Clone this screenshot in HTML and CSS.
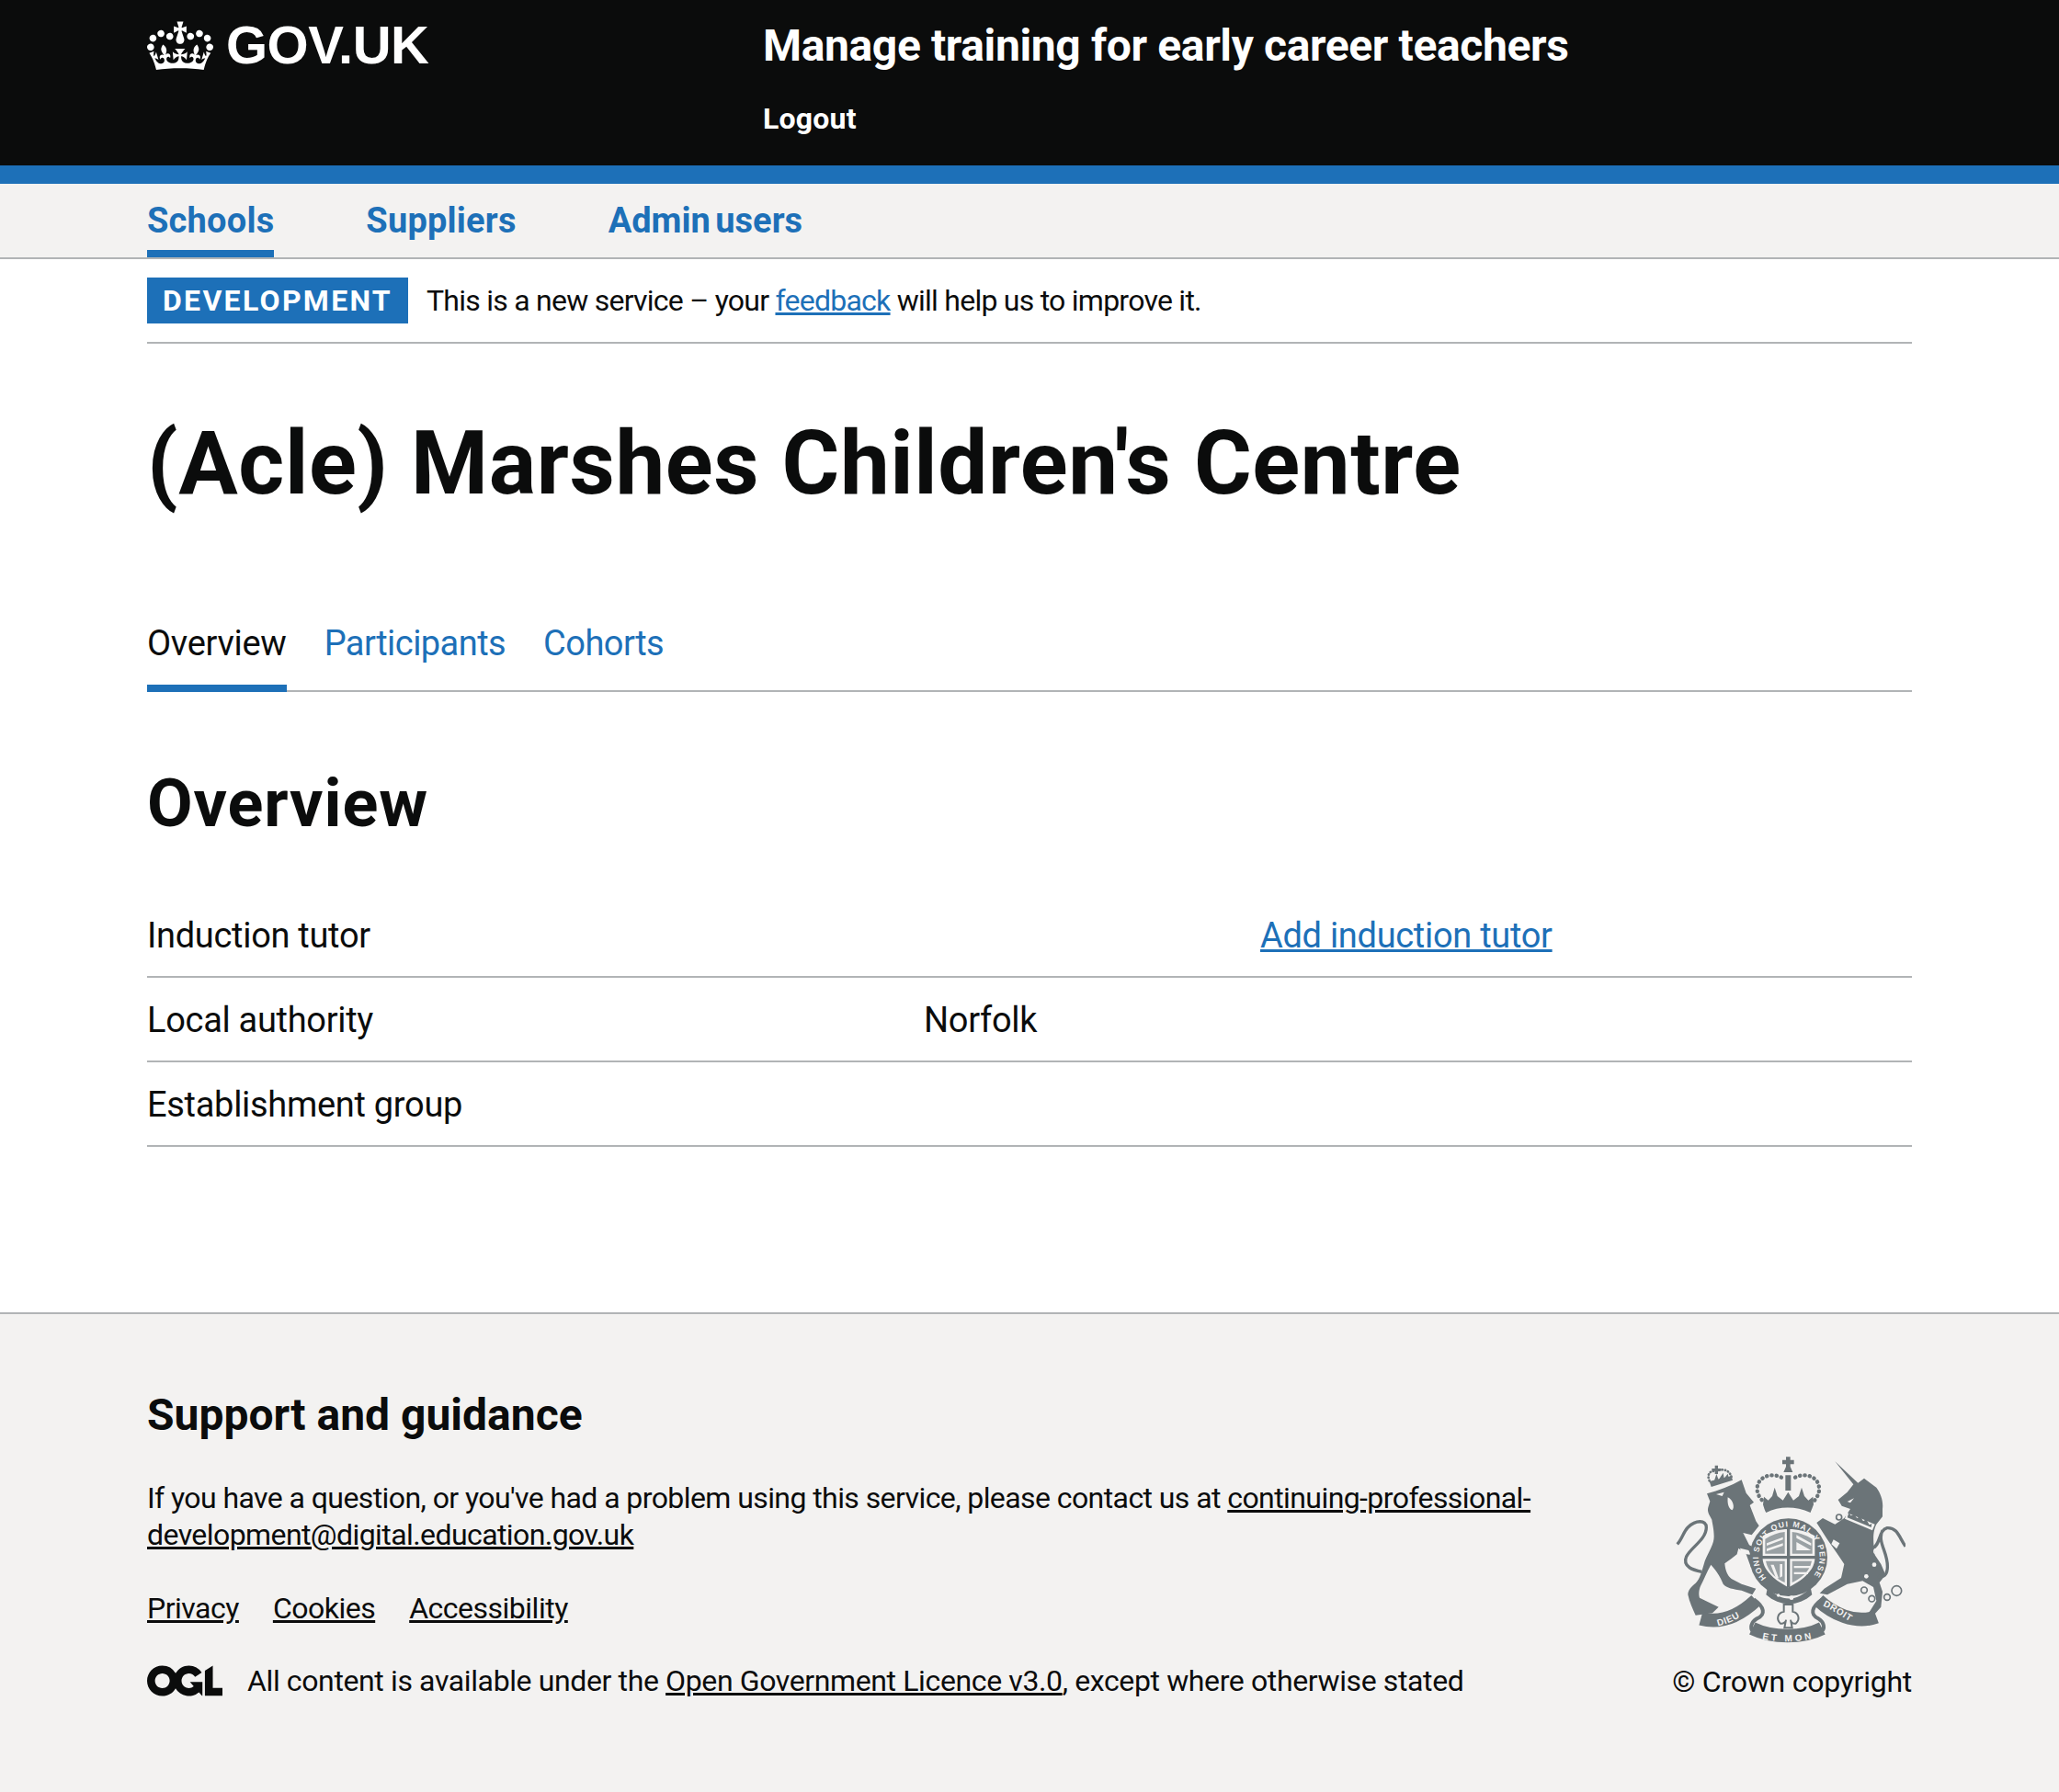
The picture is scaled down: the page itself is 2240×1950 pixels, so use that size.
FILE: index.html
```html
<!DOCTYPE html>
<html lang="en">

<head>
  <meta charset="UTF-8">
  <meta name="viewport" content="width=device-width, initial-scale=1.0">
  <title>Manage training for early career teachers</title>
  <link rel="stylesheet" href="styles.css">
</head>

<body>
  <header class="header">
    <div class="container header-row">
      <a class="logo" href="#">
        <svg class="crown" viewBox="0 0 132 97" aria-hidden="true">
          <path fill="currentColor" fill-rule="evenodd" d="M25 30.2c3.5 1.5 7.7-.2 9.1-3.7 1.5-3.6-.2-7.8-3.9-9.2-3.6-1.4-7.6.3-9.1 3.9-1.4 3.5.3 7.5 3.9 9zM9 39.5c3.6 1.5 7.8-.2 9.2-3.7 1.5-3.6-.2-7.8-3.9-9.1-3.6-1.5-7.6.2-9.1 3.8-1.4 3.5.3 7.5 3.8 9zM4.4 57.2c3.5 1.5 7.7-.2 9.1-3.8 1.5-3.6-.2-7.7-3.9-9.1-3.5-1.5-7.6.3-9.1 3.8-1.4 3.5.3 7.6 3.9 9.1zm38.3-21.4c3.5 1.5 7.7-.2 9.1-3.8 1.5-3.6-.2-7.7-3.9-9.1-3.6-1.5-7.6.3-9.1 3.8-1.3 3.6.4 7.7 3.9 9.1zm64.4-5.6c-3.6 1.5-7.8-.2-9.1-3.7-1.5-3.6.2-7.8 3.8-9.2 3.6-1.4 7.7.3 9.2 3.9 1.3 3.5-.4 7.5-3.9 9zm15.9 9.3c-3.6 1.5-7.7-.2-9.1-3.7-1.5-3.6.2-7.8 3.7-9.1 3.6-1.5 7.7.2 9.2 3.8 1.5 3.5-.3 7.5-3.8 9zm4.7 17.7c-3.6 1.5-7.8-.2-9.2-3.8-1.5-3.6.2-7.7 3.9-9.1 3.6-1.5 7.7.3 9.2 3.8 1.3 3.5-.4 7.6-3.9 9.1zM89.3 35.8c-3.6 1.5-7.8-.2-9.2-3.8-1.4-3.6.2-7.7 3.9-9.1 3.6-1.5 7.7.3 9.2 3.8 1.4 3.6-.3 7.7-3.9 9.1zM69.7 17.7l8.9 4.7V9.3l-8.9 2.8c-.2-.3-.5-.6-.9-.9L72.4 0H59.6l3.5 11.2c-.3.3-.6.5-.9.9l-8.8-2.8v13.1l8.8-4.7c.3.3.6.7.9.9l-5 15.4v.1c-.2.8-.4 1.6-.4 2.4 0 4.1 3.1 7.5 7 8.1h.2c.3 0 .7.1 1 .1.4 0 .7 0 1-.1h.2c4-.6 7.1-4.1 7.1-8.1 0-.8-.1-1.7-.4-2.4V34l-5.1-15.4c.4-.2.7-.6 1-.9zM66 92.8c16.9 0 32.8 1.1 47.1 3.2 4-16.9 8.9-26.7 14-33.5l-9.6-3.4c1 4.9 1.1 7.2 0 10.2-1.5-1.4-3-4.3-4.2-8.7L108.6 76c2.8-2 5-3.2 7.5-3.3-4.4 9.4-10 11.9-13.6 11.2-4.3-.8-6.3-4.6-5.6-7.9 1-4.7 5.7-5.9 8-.5 4.3-8.7-3-11.4-7.6-8.8 7.1-7.2 7.9-13.5 2.1-21.1-8 6.1-8.1 12.3-4.5 20.8-4.7-5.4-12.1-2.5-9.5 6.2 3.4-5.2 7.9-2 7.2 3.1-.6 4.3-6.4 7.8-13.5 7.2-10.3-.9-10.9-8-11.2-13.8 2.5-.5 7.1 1.8 11 7.3L80.2 60c-4.1 4.4-8 5.3-12.3 5.4 1.4-4.4 8-11.6 8-11.6H55.5s6.4 7.2 7.9 11.6c-4.2-.1-8-1-12.3-5.4l1.4 16.4c3.9-5.5 8.5-7.7 10.9-7.3-.3 5.8-.9 12.8-11.1 13.8-7.2.6-12.9-2.9-13.5-7.2-.7-5 3.8-8.3 7.1-3.1 2.7-8.7-4.6-11.6-9.4-6.2 3.7-8.5 3.6-14.7-4.6-20.8-5.8 7.6-5 13.9 2.2 21.1-4.7-2.6-11.9.1-7.7 8.8 2.3-5.5 7.1-4.2 8.1.5.7 3.3-1.3 7.1-5.7 7.9-3.5.7-9-1.8-13.5-11.2 2.5.1 4.7 1.3 7.5 3.3l-4.7-15.4c-1.2 4.4-2.7 7.2-4.3 8.7-1.1-3-.9-5.3 0-10.2l-9.5 3.4c5 6.9 9.9 16.7 14 33.5 14.8-2.1 30.8-3.2 47.7-3.2z"></path>
        </svg>
        <span class="logo-text">GOV.UK</span>
      </a>
      <div class="header-content">
        <a class="service-name" href="#">Manage training for early career teachers</a>
        <a class="header-link" href="#">Logout</a>
      </div>
    </div>
  </header>

  <nav class="primary-nav">
    <div class="container primary-nav-row">
      <a class="primary-link active" href="#">Schools</a>
      <a class="primary-link" href="#">Suppliers</a>
      <a class="primary-link" href="#">Admin users</a>
    </div>
  </nav>

  <div class="container">
    <div class="phase-banner">
      <strong class="phase-tag">Development</strong>
      <span>This is a new service – your <a href="#">feedback</a> will help us to improve it.</span>
    </div>

    <main>
      <h1 class="page-title">(Acle) Marshes Children's Centre</h1>

      <div class="tabs">
        <a class="tab active" href="#">Overview</a>
        <a class="tab" href="#">Participants</a>
        <a class="tab" href="#">Cohorts</a>
      </div>

      <h2 class="section-title">Overview</h2>

      <dl class="summary">
        <div class="summary-row">
          <dt>Induction tutor</dt>
          <dd></dd>
          <dd><a href="#">Add induction tutor</a></dd>
        </div>
        <div class="summary-row">
          <dt>Local authority</dt>
          <dd>Norfolk</dd>
          <dd></dd>
        </div>
        <div class="summary-row">
          <dt>Establishment group</dt>
          <dd></dd>
          <dd></dd>
        </div>
      </dl>
    </main>
  </div>

  <footer class="footer">
    <div class="container footer-row">
      <div class="footer-main">
        <h2 class="footer-title">Support and guidance</h2>
        <p class="footer-text">If you have a question, or you've had a problem using this service, please contact us at <a href="#">continuing-professional-development@digital.education.gov.uk</a></p>
        <div class="footer-links">
          <a href="#">Privacy</a>
          <a href="#">Cookies</a>
          <a href="#">Accessibility</a>
        </div>
        <div class="licence">
          <svg class="ogl" viewBox="0 0 483.2 195.7" aria-hidden="true">
            <path fill="currentColor" d="M421.5 142.8V.1l-50.7 32.3v161.1h112.4v-50.7zm-122.3-9.6A47.12 47.12 0 0 1 221 97.8c0-26 21.1-47.1 47.1-47.1 16.7 0 31.4 8.7 39.7 21.8l42.7-27.2A97.63 97.63 0 0 0 268.1 0c-36.5 0-68.3 20.1-85.1 49.7A98 98 0 0 0 97.8 0C43.9 0 0 43.9 0 97.8s43.9 97.8 97.8 97.8c36.5 0 68.3-20.1 85.1-49.7a97.76 97.76 0 0 0 149.6 25.4l19.4 22.2h3v-87.8h-80l24.3 27.5zM97.8 145c-26 0-47.1-21.1-47.1-47.1s21.1-47.1 47.1-47.1 47.2 21 47.2 47S123.8 145 97.8 145"></path>
          </svg>
          <span>All content is available under the <a href="#">Open Government Licence v3.0</a>, except where otherwise stated</span>
        </div>
      </div>
      <div class="footer-side">
        <svg class="crest" viewBox="130 80 750 610" aria-hidden="true">
          <defs>
            <path id="garter" d="M426 475A100 100 0 1 1 574 475"/>
            <path id="ribbon-left" d="M268 632C305 624 345 604 375 577"/>
            <path id="ribbon-mid" d="M412 674C465 686 530 686 584 672"/>
            <path id="ribbon-right" d="M610 566C645 582 688 612 726 634"/>
          </defs>
          <!-- lion -->
          <path d="M232 200C270 190 310 175 345 155L360 198L385 228L372 238L392 290L402 305L378 335L350 328L385 382L396 425L376 442L360 398L335 378L330 398L312 412L290 428C292 450 298 468 312 478L345 495L392 510L380 530L345 516C320 512 295 508 285 495C275 470 265 455 245 432C232 455 222 480 212 500C205 515 205 530 208 540L245 558L270 570L250 590L195 597C185 575 175 555 170 530C170 515 180 505 195 492C210 478 216 450 225 420C240 385 255 365 255 340C255 315 250 300 248 285C240 270 232 260 236 245L242 225Z"/>
          <path class="crest-line" d="M215 455C190 450 150 440 165 405C180 375 230 350 230 310C230 285 195 285 170 310C155 325 150 350 135 365"/>
          <path class="crest-mark" d="M262 202L288 195L282 208ZM300 212C318 220 324 248 314 254C302 250 298 230 300 212ZM350 328L392 378L370 368ZM340 378L368 385L375 400L345 395Z"/>
          <!-- lion's crown -->
          <path d="M258 108H268V118H278V126H268V136H258V126H248V118H258ZM240 160L312 142L316 156L246 178Z"/>
          <path class="crest-small-beads" d="M240 158C230 135 245 122 262 128C275 118 305 118 312 146"/>
          <path d="M256 158L263 136L270 155L285 132L288 150L300 135L303 148Z"/>
          <!-- unicorn -->
          <path d="M650 95L725 165L745 150L785 180C800 200 808 225 805 250L805 275L785 300C775 320 772 345 780 400L800 430L815 465L795 490L805 520L800 570L775 598L760 590L785 550L775 505L740 485L690 495L625 530L600 525L615 510L670 475L680 430L660 400L625 350L590 295L610 280L650 300L680 280L700 250L672 240L660 220L690 195L710 170Z"/>
          <path class="crest-line" d="M770 380C800 370 790 320 820 312C855 310 860 345 880 372M805 320C785 360 830 400 820 450C818 470 800 475 790 470"/>
          <path class="crest-mark" d="M688 262L780 300L772 320L682 282ZM645 350L665 362L655 380L638 365ZM690 226L712 215L700 230Z"/>
          <path d="M695 262L702 272L712 268L722 280L732 274L742 290L752 284L762 302L770 298L768 310L690 278Z"/>
          <circle class="crest-ring" cx="663" cy="277" r="9"/>
          <circle class="crest-ring" cx="745" cy="515" r="10"/>
          <circle class="crest-ring" cx="770" cy="543" r="10"/>
          <circle class="crest-ring" cx="820" cy="538" r="10"/>
          <circle class="crest-ring" cx="851" cy="517" r="16"/>
          <circle class="crest-dot" cx="752" cy="470" r="7"/>
          <circle class="crest-dot" cx="778" cy="432" r="7"/>
          <circle class="crest-ring-light" cx="785" cy="388" r="8"/>
          <!-- royal crown -->
          <path d="M490 80H504V90H516V104H504V112L512 130H482L490 112V104H478V90H490ZM488 140H506V190H488Z"/>
          <g class="crest-beads">
            <path d="M475 147C440 130 400 145 396 180C394 200 405 215 418 228"/>
            <path d="M520 147C555 130 595 145 598 180C600 200 590 215 578 228"/>
          </g>
          <path d="M415 236L418 210L432 222L445 208L453 180L462 208L480 222L497 195L514 222L532 208L541 180L550 208L563 222L578 210L580 236C575 250 572 255 570 262C520 240 470 240 425 262C420 255 418 245 415 236Z"/>
          <!-- garter and shield -->
          <circle cx="498" cy="408" r="127"/>
          <path d="M430 505C470 555 530 555 570 505L575 530C530 570 470 570 425 530Z"/>
          <path class="crest-shield" d="M414 338C440 322 470 316 498 316C530 316 556 322 584 338V415C580 455 540 485 498 506C458 485 418 455 414 415Z"/>
          <path d="M493 316H503V506H493ZM412 403H586V413H412Z"/>
          <g class="crest-quarter">
            <path d="M422 348C442 335 465 327 486 325V396H422ZM510 325C530 327 556 335 576 348V396H510Z"/>
            <path d="M424 420H486V490C460 478 432 458 424 420ZM510 420H574C566 458 535 478 510 490Z"/>
          </g>
          <path class="crest-mark" d="M427 362L480 342V350L427 370ZM427 380L480 362V370L427 388ZM524 335L572 362V370L524 345ZM524 358L572 385H524ZM516 436H568V443H516ZM516 456H562V463H516ZM440 432L450 432L466 476L458 478ZM470 430H478V470L470 474Z"/>
          <text class="crest-text"><textPath href="#garter" textLength="450" lengthAdjust="spacing">HONI SOIT QUI MAL Y PENSE</textPath></text>
          <circle class="crest-dot" cx="508" cy="540" r="7"/>
          <circle class="crest-dot" cx="465" cy="532" r="5"/>
          <!-- motto ribbon -->
          <g class="crest-ribbon">
            <path d="M212 608C285 628 345 592 392 548"/>
            <path d="M380 640C445 672 545 672 608 640"/>
            <path d="M596 548C640 590 715 628 785 602"/>
          </g>
          <g class="crest-fold">
            <path d="M385 545C420 570 425 595 395 608C375 620 372 640 382 650"/>
            <path d="M608 545C572 570 568 595 596 608C615 620 618 640 606 650"/>
          </g>
          <text class="crest-motto"><textPath href="#ribbon-left">DIEU</textPath></text>
          <text class="crest-motto"><textPath href="#ribbon-mid" textLength="165">ET MON</textPath></text>
          <text class="crest-motto"><textPath href="#ribbon-right">DROIT</textPath></text>
          <!-- fleur-de-lis -->
          <path class="crest-fleur" d="M483 562H512V585C530 588 538 610 522 624C512 626 505 618 505 612L510 638H485L490 612C490 618 482 626 472 624C456 610 464 588 483 585Z"/>
        </svg>
        <span class="copyright">© Crown copyright</span>
      </div>
    </div>
  </footer>
</body>

</html>
```

FILE: styles.css
```css
* {
  box-sizing: border-box;
}

body {
  margin: 0;
  background-color: #fff;
  color: #0b0c0c;
  font-family: Roboto, Arial, sans-serif;
  font-size: 38px;
  line-height: 50px;
  letter-spacing: -0.3px;
}

a {
  color: #1d70b8;
}

.container {
  width: 1920px;
  margin: 0 auto;
}

/* header */
.header {
  height: 200px;
  background-color: #0b0c0c;
  border-bottom: 20px solid #1d70b8;
  color: #fff;
}

.header-row {
  display: flex;
  padding-top: 18px;
}

.logo {
  display: flex;
  align-items: flex-start;
  width: 670px;
  color: #fff;
  text-decoration: none;
}

.crown {
  width: 72px;
  height: 54px;
  margin-top: 5px;
}

.logo-text {
  margin-left: 14px;
  font-family: "Liberation Sans", Arial, sans-serif;
  font-size: 58px;
  font-weight: 700;
  line-height: 62px;
  letter-spacing: -0.5px;
}

.header-content {
  display: flex;
  flex-direction: column;
  align-items: flex-start;
}

.service-name {
  padding-top: 1px;
  color: #fff;
  font-size: 48px;
  font-weight: 700;
  line-height: 62px;
  letter-spacing: -0.37px;
  text-decoration: none;
}

.header-link {
  margin-top: 28px;
  color: #fff;
  font-size: 32px;
  font-weight: 700;
  line-height: 40px;
  letter-spacing: 0.2px;
  text-decoration: none;
}

/* primary nav */
.primary-nav {
  height: 82px;
  background-color: #f3f2f1;
  border-bottom: 2px solid #b1b4b6;
}

.primary-nav-row {
  display: flex;
  gap: 100px;
}

.primary-link {
  height: 80px;
  padding-top: 15px;
  color: #1d70b8;
  font-size: 38px;
  font-weight: 700;
  line-height: 50px;
  letter-spacing: 0.2px;
  word-spacing: -4px;
  text-decoration: none;
}

.primary-link:last-child {
  letter-spacing: 0;
}

.primary-link.active {
  border-bottom: 8px solid #1d70b8;
}

/* phase banner */
.phase-banner {
  display: flex;
  align-items: center;
  gap: 20px;
  height: 92px;
  border-bottom: 2px solid #b1b4b6;
  font-size: 32px;
  line-height: 40px;
  letter-spacing: -0.75px;
}

.phase-tag {
  display: block;
  width: 284px;
  height: 50px;
  background-color: #1d70b8;
  color: #fff;
  font-size: 32px;
  line-height: 50px;
  text-align: center;
  text-transform: uppercase;
  letter-spacing: 2.3px;
}

/* main */
.page-title {
  margin: 80px 0 119px;
  font-size: 96px;
  font-weight: 700;
  line-height: 100px;
  letter-spacing: 0.6px;
}

.tabs {
  display: flex;
  gap: 41px;
  height: 80px;
  border-bottom: 2px solid #b1b4b6;
  letter-spacing: -0.55px;
}

.tab {
  height: 80px;
  padding-top: 2px;
  color: #1d70b8;
  text-decoration: none;
}

.tab.active {
  border-bottom: 8px solid #1d70b8;
  color: #0b0c0c;
  letter-spacing: -0.3px;
}

.section-title {
  margin: 82px 0 57px;
  font-size: 72px;
  font-weight: 700;
  line-height: 80px;
  letter-spacing: 0.9px;
}

.summary {
  margin: 0;
}

.summary-row {
  display: grid;
  grid-template-columns: 845px 366px 1fr;
  height: 92px;
  padding: 21px 0 19px;
  border-bottom: 2px solid #b1b4b6;
}

.summary-row dd {
  margin: 0;
}

/* footer */
.footer {
  height: 522px;
  margin-top: 180px;
  background-color: #f3f2f1;
  border-top: 2px solid #b1b4b6;
  font-size: 32px;
  line-height: 40px;
  letter-spacing: -0.58px;
}

.footer a {
  color: #0b0c0c;
}

.footer-row {
  display: flex;
  justify-content: space-between;
  padding-top: 80px;
}

.footer-main {
  width: 1540px;
}

.footer-title {
  margin: 0 0 40px;
  font-size: 48px;
  font-weight: 700;
  line-height: 60px;
  letter-spacing: 0;
}

.footer-text {
  margin: 0 0 40px;
}

.footer-links {
  display: flex;
  gap: 37px;
  margin-bottom: 39px;
  letter-spacing: -0.5px;
}

.licence {
  display: flex;
  align-items: center;
  gap: 27px;
  letter-spacing: -0.38px;
}

.ogl {
  width: 82px;
  height: 34px;
}

.footer-side {
  display: flex;
  flex-direction: column;
  align-items: flex-end;
  padding-top: 75px;
}

.copyright {
  letter-spacing: -0.25px;
}

.crest {
  width: 250px;
  height: 204px;
  margin: 0 7px 21px 0;
  fill: #6b7478;
}

.crest-line {
  fill: none;
  stroke: #6b7478;
  stroke-width: 10;
}

.crest-mark,
.crest-shield,
.crest-dot {
  fill: #f3f2f1;
}

.crest-quarter {
  fill: #9aa1a4;
}

.crest-ring {
  fill: none;
  stroke: #6b7478;
  stroke-width: 5;
}

.crest-ring-light {
  fill: none;
  stroke: #f3f2f1;
  stroke-width: 4;
}

.crest-beads {
  fill: none;
  stroke: #6b7478;
  stroke-width: 13;
  stroke-dasharray: 1 15;
  stroke-linecap: round;
}

.crest-small-beads {
  fill: none;
  stroke: #6b7478;
  stroke-width: 8;
  stroke-dasharray: 1 9;
  stroke-linecap: round;
}

.crest-ribbon {
  fill: none;
  stroke: #6b7478;
  stroke-width: 44;
}

.crest-fold {
  fill: none;
  stroke: #6b7478;
  stroke-width: 12;
}

.crest-fleur {
  fill: #f3f2f1;
  stroke: #6b7478;
  stroke-width: 6;
}

.crest-text {
  fill: #f3f2f1;
  font-family: "Liberation Sans", Arial, sans-serif;
  font-size: 26px;
  font-weight: 700;
  letter-spacing: 0;
}

.crest-motto {
  fill: #f3f2f1;
  font-family: "Liberation Sans", Arial, sans-serif;
  font-size: 30px;
  font-weight: 700;
  letter-spacing: 2px;
}
```
